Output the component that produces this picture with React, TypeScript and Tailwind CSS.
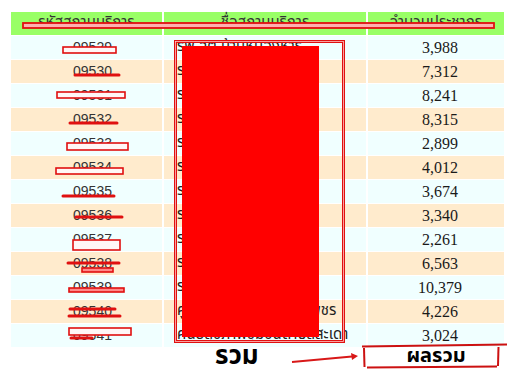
import React from 'react'

interface Row {
  code: string
  name: string
  total: string
}

const rows: Row[] = [
  { code: '09529', name: 'รพ.สต.บ้านหนองหาร', total: '3,988' },
  { code: '09530', name: 'รพ.สต.บ้านโคกสูง', total: '7,312' },
  { code: '09531', name: 'รพ.สต.บ้านหนองแวง', total: '8,241' },
  { code: '09532', name: 'รพ.สต.บ้านดอนหัน', total: '8,315' },
  { code: '09533', name: 'รพ.สต.บ้านนาดี', total: '2,899' },
  { code: '09534', name: 'รพ.สต.บ้านหนองบัว', total: '4,012' },
  { code: '09535', name: 'รพ.สต.บ้านโนนสวรรค์', total: '3,674' },
  { code: '09536', name: 'รพ.สต.บ้านท่าขอนยาง', total: '3,340' },
  { code: '09537', name: 'รพ.สต.บ้านหัวขัว', total: '2,261' },
  { code: '09538', name: 'รพ.สต.บ้านโพนงาม', total: '6,563' },
  { code: '09539', name: 'รพ.สต.บ้านเหล่าใหญ่', total: '10,379' },
  { code: '09540', name: 'ศูนย์สุขภาพชุมชนบ้านเพชร', total: '4,226' },
  { code: '09541', name: 'ศูนย์สุขภาพชุมชนตำบลสะเดา', total: '3,024' },
]

const thai = { fontFamily: '"Noto Sans Thai", Tahoma, "Noto Sans", "DejaVu Sans", sans-serif' }

// red pen marks drawn over the code column: [kind, x1, y1, x2, y2]
const marks: [string, number, number, number, number][] = [
  ['box', 63, 47, 116, 53],
  ['bar', 75, 75, 119, 75],
  ['box', 57, 92, 125, 98],
  ['bar', 70, 123, 117, 123],
  ['box', 67, 143, 128, 150],
  ['box', 56, 168, 123, 174],
  ['bar', 63, 196, 114, 196],
  ['bar', 76, 217, 122, 217],
  ['box', 73, 240, 120, 250],
  ['bar', 68, 263, 119, 263],
  ['pill', 82, 268, 113, 272],
  ['pill', 69, 288, 124, 292],
  ['bar', 70, 309, 115, 309],
  ['bar', 69, 316, 120, 316],
  ['box', 69, 328, 131, 335],
  ['bar', 71, 338, 92, 338],
]

const Marks = () => (
  <svg className="absolute inset-0 pointer-events-none" width={507} height={373}>
    {marks.map(([kind, x1, y1, x2, y2], i) =>
      kind === 'bar' ? (
        <line key={i} x1={x1} y1={y1} x2={x2} y2={y2} stroke="#e01010" strokeWidth={3} strokeLinecap="round" />
      ) : (
        <rect
          key={i}
          x={x1}
          y={y1}
          width={x2 - x1}
          height={y2 - y1}
          fill={kind === 'box' ? '#fff6f6' : '#ff8a8a'}
          stroke="#e01010"
          strokeWidth={1.6}
        />
      )
    )}
    <rect x={23} y={23} width={471} height={5} fill="#ffb0b0" stroke="#e01010" strokeWidth={1.8} />
    <rect x={175.5} y={41.5} width={168} height={300} fill="none" stroke="#e01010" strokeWidth={3} />
    <rect x={175.5} y={41.5} width={168} height={300} fill="none" stroke="#ffc4c4" strokeWidth={0.8} />
    <rect x={182} y={46} width={137} height={291} fill="#ff0000" />
    <line x1={292} y1={362} x2={352} y2={356.5} stroke="#d81818" strokeWidth={2} />
    <polygon points="358,356 351,353 352,360" fill="#d81818" />
    <line x1={362} y1={346.5} x2={507} y2={344.5} stroke="#cc1111" strokeWidth={2} />
    <line x1={364} y1={348} x2={364.5} y2={367} stroke="#cc1111" strokeWidth={2} />
    <line x1={498.5} y1={347} x2={498} y2={366} stroke="#cc1111" strokeWidth={2} />
    <line x1={367} y1={367.5} x2={497} y2={366.5} stroke="#cc1111" strokeWidth={2} />
  </svg>
)

export default function App() {
  return (
    <div className="relative w-[507px] h-[373px] overflow-hidden bg-white">
      <div className="pl-[11px] pt-[12px]">
        <div className="grid grid-cols-[151px_202px_136px] gap-x-[2px] gap-y-[1px]">
          <div className="h-[23px] bg-[#99ff66] flex items-center justify-center text-[15px] text-[#333]" style={thai}>
            รหัสสถานบริการ
          </div>
          <div className="h-[23px] bg-[#99ff66] flex items-center justify-center text-[15px] text-[#333]" style={thai}>
            ชื่อสถานบริการ
          </div>
          <div className="h-[23px] bg-[#99ff66] flex items-center justify-center text-[15px] text-[#333]" style={thai}>
            จำนวนประชากร
          </div>
          {rows.map((r, i) => {
            const bg = i % 2 === 0 ? 'bg-[#f0ffff]' : 'bg-[#ffebcd]'
            return (
              <React.Fragment key={r.code}>
                <div className={`${bg} h-[23px] flex items-center justify-center pl-3 text-[14px] text-[#333] font-['Liberation_Sans',sans-serif]`}>
                  {r.code}
                </div>
                <div className={`${bg} h-[23px] flex items-center pl-[13px] text-[15px] text-[#222] whitespace-nowrap overflow-hidden`} style={thai}>
                  {r.name}
                </div>
                <div className={`${bg} h-[23px] flex items-center justify-center pl-2 text-[16px] text-[#1a1a1a] font-['Liberation_Serif',serif]`}>
                  {r.total}
                </div>
              </React.Fragment>
            )
          })}
          <div className="h-[16px]" />
          <div className="h-[16px] flex items-center pl-[51px] text-[26px] font-bold leading-[16px] text-black" style={thai}>
            รวม
          </div>
          <div className="h-[16px] flex items-center justify-center text-[20px] font-bold leading-[16px] text-black" style={thai}>
            ผลรวม
          </div>
        </div>
      </div>
      <Marks />
    </div>
  )
}
